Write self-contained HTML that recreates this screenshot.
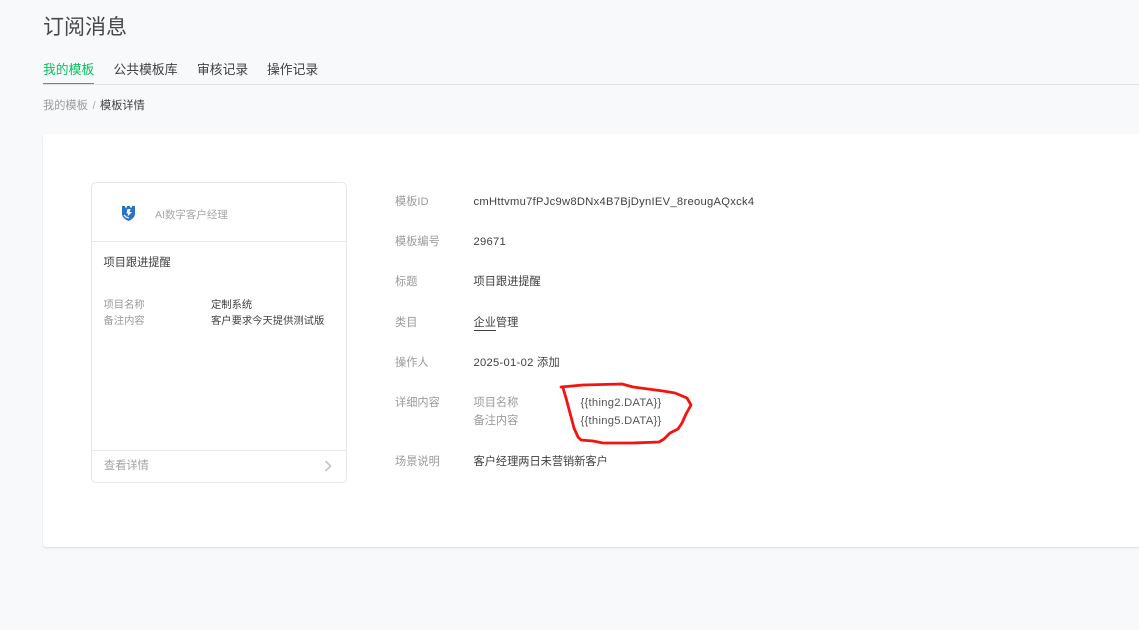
<!DOCTYPE html>
<html lang="zh"><head><meta charset="utf-8"><style>
html,body{margin:0;padding:0}
body{width:1139px;height:630px;overflow:hidden;background:#f8f9fb;position:relative;font-family:"Liberation Sans","Noto Sans CJK SC",sans-serif;font-size:11.2px;color:#404040}
.t{position:absolute;white-space:nowrap;line-height:16px}
.g{color:#9a9a9a}
.s{font-size:10.3px}
.l{letter-spacing:.285px}
.box{position:absolute;box-sizing:border-box}
</style></head><body>
<div class="t" style="left:43px;top:13px;font-size:21px;line-height:30px;color:#484848">订阅消息</div>
<div class="t" style="left:43px;top:62px;font-size:12.8px;color:#07c160">我的模板</div>
<div class="t" style="left:113.5px;top:62px;font-size:12.8px">公共模板库</div>
<div class="t" style="left:197px;top:62px;font-size:12.8px">审核记录</div>
<div class="t" style="left:267px;top:62px;font-size:12.8px">操作记录</div>
<div class="box" style="left:43px;top:84px;width:1096px;height:1px;background:#e0e2e6"></div>
<div class="box" style="left:43px;top:83px;width:51px;height:1px;background:#07c160"></div>
<div class="t g" style="left:43px;top:98px">我的模板</div>
<div class="t" style="left:92.5px;top:98px;color:#aaa">/</div>
<div class="t" style="left:100px;top:98px">模板详情</div>

<div class="box" style="left:43px;top:134px;width:1110px;height:413px;background:#fff;border-radius:3px;box-shadow:0 1px 2px rgba(0,0,0,.12)"></div>

<div class="box" style="left:91px;top:182px;width:256px;height:301px;background:#fff;border:1px solid #e6e6e8;border-radius:5px"></div>
<div class="box" style="left:92px;top:241px;width:254px;height:1px;background:#e8e8ea"></div>
<div class="box" style="left:92px;top:450px;width:254px;height:1px;background:#e8e8ea"></div>
<svg style="position:absolute;left:121px;top:205px" width="15" height="17" viewBox="0 0 15 17"><path d="M1 1h3v1.500h2V1h3v1.500h2V1h3v8c0 3-3 5.500-6.500 7C4 14.500 1 12 1 9z" fill="#2a73c4"/><path d="M6.500 4h3.200L8.500 7h2.500L6.500 11.500l.8-3H5.500z" fill="#fff"/><path d="M3 10c1.500 2 3 2.800 5 2.800" stroke="#fff" stroke-width="1.200" fill="none"/></svg>
<div class="t s" style="left:155px;top:207px;color:#a8a8a8;font-size:10.5px">AI数字客户经理</div>
<div class="t" style="left:103.5px;top:255px">项目跟进提醒</div>
<div class="t g s" style="left:103.5px;top:298px">项目名称</div>
<div class="t s" style="left:211px;top:298px">定制系统</div>
<div class="t g s" style="left:103.5px;top:314px">备注内容</div>
<div class="t s" style="left:211px;top:314px">客户要求今天提供测试版</div>
<div class="t" style="left:104px;top:458px;color:#a2a2a2">查看详情</div>
<svg style="position:absolute;left:323px;top:459px" width="10" height="14" viewBox="0 0 10 14"><path d="M2.500 2l5 5-5 5" fill="none" stroke="#c8c8c8" stroke-width="1.800"/></svg>

<div class="t g" style="left:395px;top:194px">模板ID</div>
<div class="t l" style="left:473.500px;top:194px">cmHttvmu7fPJc9w8DNx4B7BjDynIEV_8reougAQxck4</div>
<div class="t g" style="left:395px;top:234px">模板编号</div>
<div class="t l" style="left:473.500px;top:234px">29671</div>
<div class="t g" style="left:395px;top:274px">标题</div>
<div class="t" style="left:473.500px;top:274px">项目跟进提醒</div>
<div class="t g" style="left:395px;top:315px">类目</div>
<div class="t" style="left:473.500px;top:315px"><span style="border-bottom:1px solid #404040;line-height:13px;display:inline-block">企业</span>管理</div>
<div class="t g" style="left:395px;top:355px">操作人</div>
<div class="t l" style="left:473.500px;top:355px">2025-01-02 添加</div>
<div class="t g" style="left:395px;top:395px">详细内容</div>
<div class="t g" style="left:473.500px;top:395px">项目名称</div>
<div class="t l" style="left:580.500px;top:395px;color:#555">{{thing2.DATA}}</div>
<div class="t g" style="left:473.500px;top:413px">备注内容</div>
<div class="t l" style="left:580.500px;top:413px;color:#555">{{thing5.DATA}}</div>
<div class="t g" style="left:395px;top:454px">场景说明</div>
<div class="t" style="left:473.500px;top:454px">客户经理两日未营销新客户</div>

<svg style="position:absolute;left:0;top:0" width="1139" height="630" viewBox="0 0 1139 630"><path d="M561 387L583 385L622 384L633 387L663 391L675 393L687 398L691 405L686 414L682 423L678 429L670 433L664 439L659 442L633 443L603 443L593 441L581 440L578 437L574 428L570 413L566 398L563 388" fill="none" stroke="#f5130f" stroke-width="2.800" stroke-linejoin="round" stroke-linecap="round"/></svg>
</body></html>
